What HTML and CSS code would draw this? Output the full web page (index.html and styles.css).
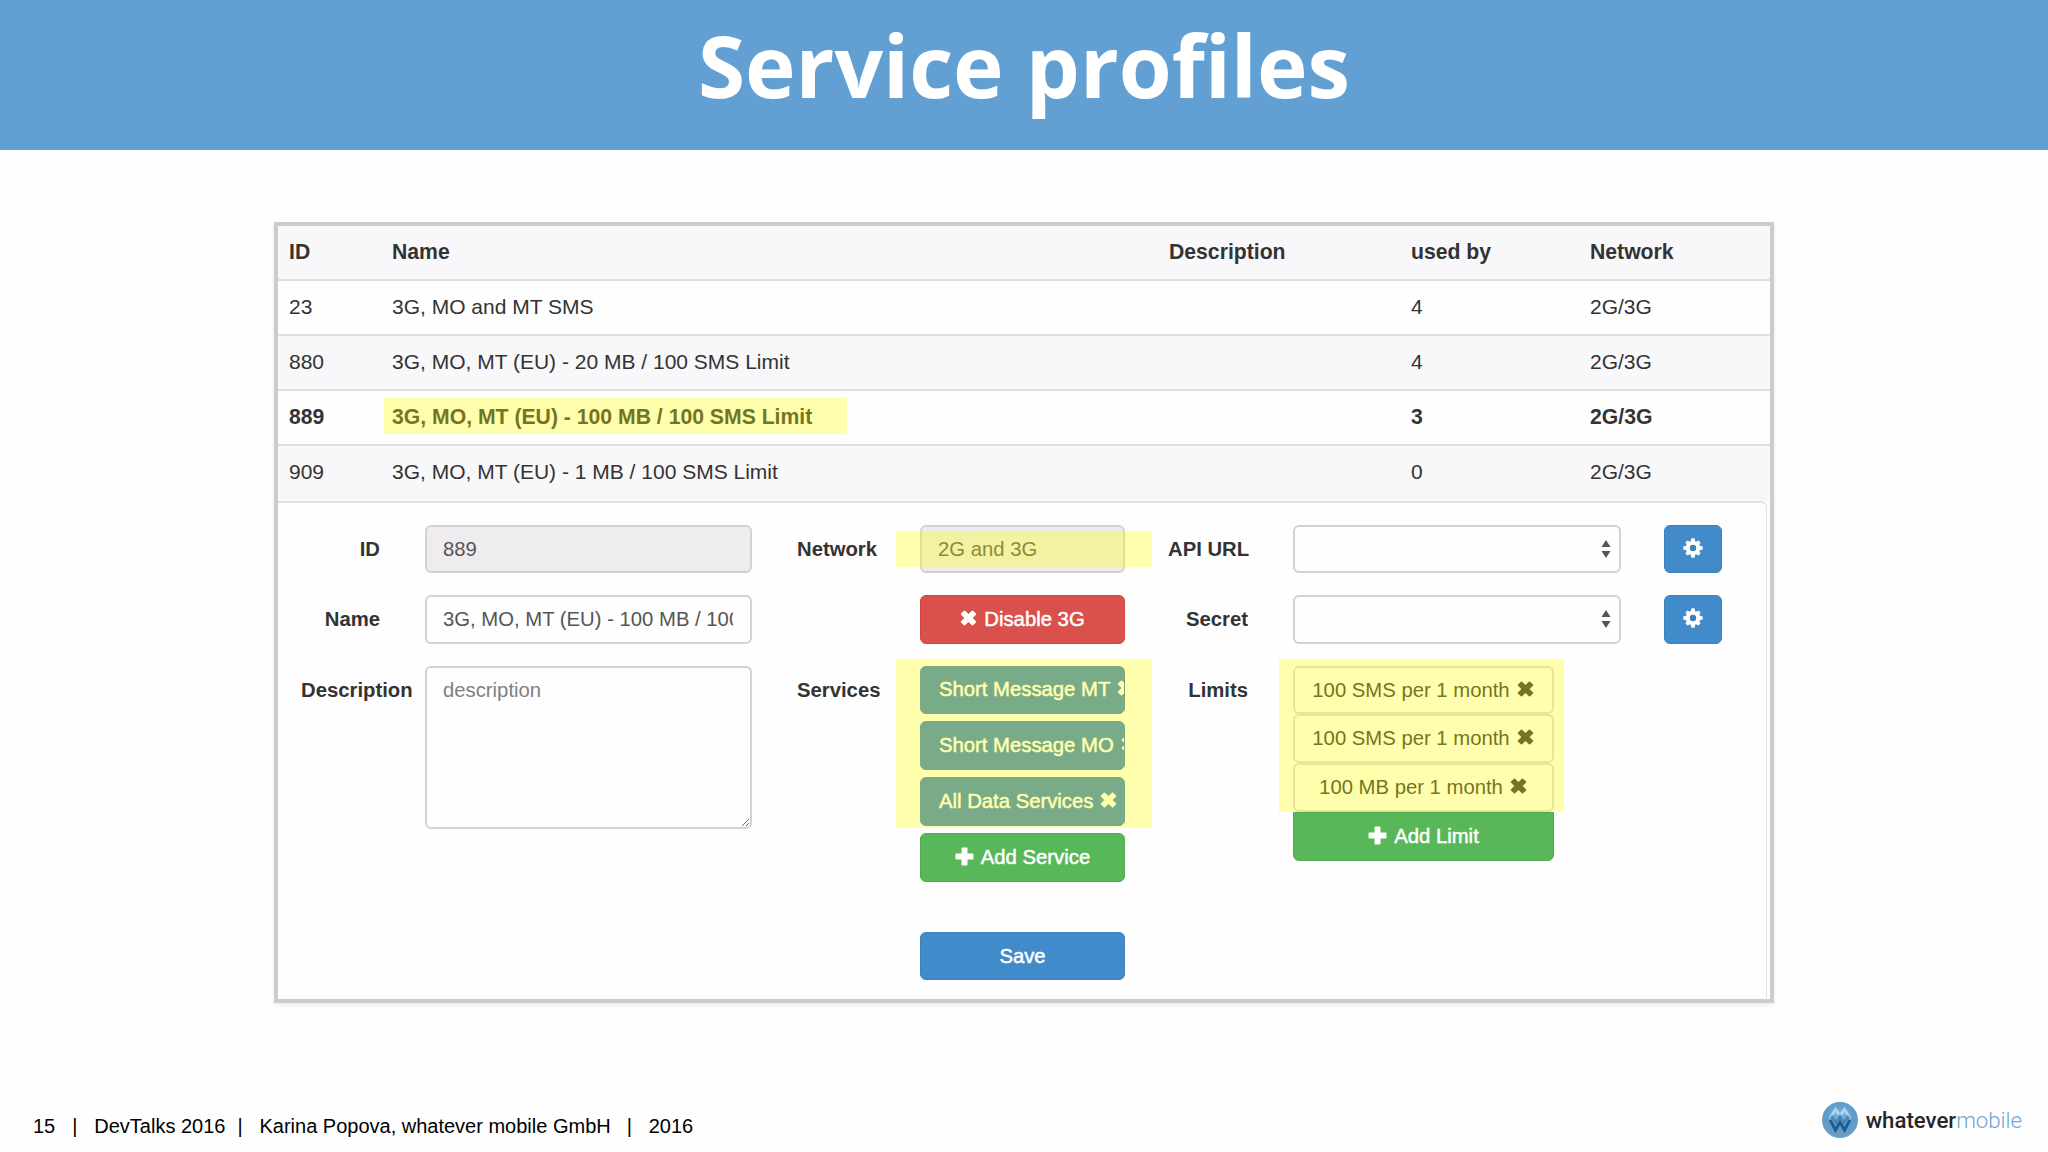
FILE: index.html
```html
<!DOCTYPE html>
<html lang="en">
<head>
<meta charset="UTF-8">
<title>Service profiles</title>
<link rel="stylesheet" href="styles.css">
</head>
<body>
<!-- shared icons -->
<svg class="sprite">
	<symbol id="remove" viewBox="0 0 17 16">
		<path d="M1 3.6 3.9.7q.6-.5 1.2 0l3.4 3.2L11.900.7q.6-.5 1.200 0L16 3.600q.5.500 0 1.100L12.600 8 16 11.300q.5.600 0 1.100L13.100 15.300q-.6.500-1.200 0L8.500 12.100 5.100 15.300q-.6.500-1.200 0L1 12.400q-.5-.5 0-1.100L4.400 8 1 4.700q-.5-.6 0-1.100z"/>
	</symbol>
	<symbol id="plus" viewBox="0 0 19 19">
		<path d="M7.300.5h4.400q.8 0 .8.800v5.200h5.200q.8 0 .8.800v4.400q0 .8-.8.800h-5.200v5.200q0 .8-.8.800H7.300q-.8 0-.8-.8v-5.200H1.300q-.8 0-.8-.8V7.300q0-.8.8-.8h5.200V1.300q0-.8.800-.8z"/>
	</symbol>
	<symbol id="cog" viewBox="-10 -10 20 20">
		<g id="teeth">
			<path d="M-2.400-6 -1.500-9.700h3L2.400-6v12L1.500 9.700h-3L-2.400 6z"/>
			<path transform="rotate(45)" d="M-2.400-6 -1.500-9.200h3L2.400-6v12L1.500 9.200h-3L-2.400 6z"/>
			<path transform="rotate(90)" d="M-2.400-6 -1.500-9.700h3L2.400-6v12L1.500 9.700h-3L-2.400 6z"/>
			<path transform="rotate(135)" d="M-2.400-6 -1.500-9.200h3L2.400-6v12L1.500 9.200h-3L-2.400 6z"/>
		</g>
		<circle r="7"/>
		<circle class="hole" r="3.200"/>
	</symbol>
</svg>

<header class="title">
	<h1>Service profiles</h1>
</header>

<main class="panel">
	<table class="profiles">
		<thead>
			<tr><th class="colId">ID</th><th class="colName">Name</th><th class="colDesc">Description</th><th class="colUsed">used by</th><th>Network</th></tr>
		</thead>
		<tbody>
			<tr><td>23</td><td>3G, MO and MT SMS</td><td></td><td>4</td><td>2G/3G</td></tr>
			<tr><td>880</td><td>3G, MO, MT (EU) - 20 MB / 100 SMS Limit</td><td></td><td>4</td><td>2G/3G</td></tr>
			<tr class="selected"><td>889</td><td><span class="marked markedName">3G, MO, MT (EU) - 100 MB / 100 SMS Limit</span></td><td></td><td>3</td><td>2G/3G</td></tr>
			<tr><td>909</td><td>3G, MO, MT (EU) - 1 MB / 100 SMS Limit</td><td></td><td>0</td><td>2G/3G</td></tr>
		</tbody>
	</table>

	<form class="edit">
		<div class="group">
			<div class="row">
				<label for="profileId">ID</label>
				<input type="text" class="field" id="profileId" value="889" disabled>
			</div>
			<div class="row">
				<label for="profileName">Name</label>
				<input type="text" class="field" id="profileName" value="3G, MO, MT (EU) - 100 MB / 100 SMS Limit">
			</div>
			<div class="row">
				<label for="description">Description</label>
				<textarea class="field area" id="description" placeholder="description"></textarea>
			</div>
		</div>

		<div class="group network">
			<div class="row">
				<label for="network">Network</label>
				<div class="stack marked markedNetwork">
					<input type="text" class="field" id="network" value="2G and 3G" disabled>
				</div>
			</div>
			<div class="row">
				<label></label>
				<div class="stack">
					<button type="button" class="btn red"><svg class="x"><use href="#remove"/></svg>Disable 3G</button>
				</div>
			</div>
			<div class="row">
				<label>Services</label>
				<div class="stack">
					<div class="services marked markedServices">
						<button type="button" class="btn blue service">Short Message MT<svg class="x"><use href="#remove"/></svg></button>
						<button type="button" class="btn blue service">Short Message MO<svg class="x"><use href="#remove"/></svg></button>
						<button type="button" class="btn blue service">All Data Services<svg class="x"><use href="#remove"/></svg></button>
					</div>
					<button type="button" class="btn green"><svg class="plus"><use href="#plus"/></svg>Add Service</button>
					<button type="button" class="btn blue save">Save</button>
				</div>
			</div>
		</div>

		<div class="group api">
			<div class="row">
				<label>API URL</label>
				<div class="field select"><svg viewBox="0 0 10 18"><path d="M5 0 9.500 7H.5zM5 18 .5 11h9z"/></svg></div>
				<button type="button" class="btn blue gear"><svg><use href="#cog"/></svg></button>
			</div>
			<div class="row">
				<label>Secret</label>
				<div class="field select"><svg viewBox="0 0 10 18"><path d="M5 0 9.500 7H.5zM5 18 .5 11h9z"/></svg></div>
				<button type="button" class="btn blue gear"><svg><use href="#cog"/></svg></button>
			</div>
			<div class="row">
				<label>Limits</label>
				<div class="limits">
					<div class="marked markedLimits">
						<div class="btn limit">100 SMS per 1 month<svg class="x"><use href="#remove"/></svg></div>
						<div class="btn limit">100 SMS per 1 month<svg class="x"><use href="#remove"/></svg></div>
						<div class="btn limit">100 MB per 1 month<svg class="x"><use href="#remove"/></svg></div>
					</div>
					<button type="button" class="btn green addLimit"><svg class="plus"><use href="#plus"/></svg>Add Limit</button>
				</div>
			</div>
		</div>
	</form>
</main>

<footer class="footer">
	<div class="info">
		<span class="page">15</span><span class="bar">|</span><span class="event">DevTalks 2016</span><span class="bar">|</span><span class="author">Karina Popova, whatever mobile GmbH</span><span class="bar">|</span><span class="year">2016</span>
	</div>
	<div class="logo">
		<svg class="ball" viewBox="0 0 36 36">
			<defs>
				<radialGradient id="ballFill" cx="50%" cy="42%" r="55%">
					<stop offset="0" stop-color="#7db4dc"/>
					<stop offset=".75" stop-color="#5f9bc8"/>
					<stop offset="1" stop-color="#6f9dc0"/>
				</radialGradient>
			</defs>
			<circle cx="18" cy="18" r="18" fill="url(#ballFill)"/>
			<path class="up" d="M8 16 13.500 7.500 18 13.500 22.500 7.500 28 16"/>
			<path class="mid" d="M9.500 14 14 21 18 14.500 22 21 26.500 14"/>
			<path class="down" d="M8 18 13.500 28 18 20.500 22.500 28 28 18"/>
		</svg>
		<span class="whatever">whatever</span><span class="mobile">mobile</span>
	</div>
</footer>
</body>
</html>
```
FILE: styles.css
```css
* {
	margin: 0px;
	padding: 0px;
	box-sizing: border-box;
}

body {
	width: 2048px;
	height: 1152px;
	display: flex;
	flex-direction: column;
	overflow: hidden;
	background: #fefefe;
	color: #333;
	font-family: "Liberation Sans", Arial, sans-serif;
}

.sprite {
	position: absolute;
	width: 0;
	height: 0;
}

.title {
	height: 150px;
	background: #62a0d3;
	color: #fff;
	text-align: center;
}

.title h1 {
	font-family: "Open Sans", sans-serif;
	font-size: 85.500px;
	line-height: 130px;
	font-weight: bold;
}

.panel {
	width: 1500px;
	height: 781px;
	margin: 72px 0 0 274px;
	border: 4px solid #cdcbcd;
	box-shadow: 0 2px 5px rgba(0, 0, 0, 0.08);
}

/* table */
.profiles {
	width: 100%;
	border-collapse: collapse;
	table-layout: fixed;
	font-size: 21.2px;
}

.profiles th, .profiles td {
	height: 55px;
	padding: 0 0 1px 11px;
	text-align: left;
	border-bottom: 2px solid #e0dee1;
	white-space: nowrap;
}

.profiles td {
	font-size: 21px;
}

.profiles th {
	height: 54px;
}

.profiles .colId {
	width: 103px;
}

.profiles .colName {
	width: 777px;
}

.profiles .colDesc {
	width: 242px;
}

.profiles .colUsed {
	width: 179px;
}

.profiles thead tr, .profiles tbody tr:nth-child(even) {
	background: #f8f7f9;
}

.profiles tbody tr:last-child td {
	height: 56px;
	padding-bottom: 3px;
	border-bottom: none;
}

.profiles .selected td {
	font-size: 21.2px;
	font-weight: bold;
}

/* yellow marker over the important parts */
.marked {
	position: relative;
}

.marked::after {
	content: "";
	position: absolute;
	background: rgba(255, 255, 0, 0.32);
	pointer-events: none;
}

.markedName::after {
	inset: -7px -35px -6px -8px;
}

.markedNetwork::after {
	inset: 6px -27px 6px -24px;
}

.markedServices::after {
	inset: -7px -27px -2px -24px;
}

.markedLimits::after {
	inset: -7px -10px 0 -14px;
}

/* form */
.edit {
	height: 499px;
	margin-right: 3px;
	padding: 22px 0 0 23px;
	display: flex;
	align-items: flex-start;
	border-top: 2px solid #e3e1e4;
	border-right: 1px solid #e3e1e4;
	border-top-right-radius: 6px;
	font-size: 20.3px;
}

.group {
	display: flex;
	flex-direction: column;
	gap: 22px;
}

.network {
	margin-left: 45px;
}

.api {
	margin-left: 43px;
}

.row {
	display: flex;
	align-items: flex-start;
}

.row label {
	width: 79px;
	margin-right: 45px;
	line-height: 48.3px;
	text-align: right;
	font-weight: bold;
	white-space: nowrap;
}

.network .row label {
	width: 80px;
	margin-right: 43px;
}

.api .row label {
	width: 80px;
	margin-right: 45px;
}

.field {
	display: block;
	width: 327px;
	height: 48.3px;
	padding: 0 17px 0 16px;
	border: 2px solid #d3d1d5;
	border-radius: 6px;
	background: #fefefe;
	color: #555;
	font-family: inherit;
	font-size: 20.3px;
}

.field:disabled {
	background: #eeecef;
}

.area {
	height: 163px;
	padding-top: 11px;
	resize: both;
}

.area::placeholder {
	color: #808080;
}

.stack {
	width: 205px;
	display: flex;
	flex-direction: column;
	gap: 7.600px;
}

.stack .field {
	width: 100%;
}

.services {
	display: flex;
	flex-direction: column;
	gap: 7.600px;
}

.btn {
	width: 100%;
	height: 48.3px;
	display: flex;
	align-items: center;
	justify-content: center;
	gap: 7px;
	overflow: hidden;
	border: 1px solid transparent;
	border-radius: 6px;
	color: #fff;
	fill: currentColor;
	font-family: inherit;
	font-size: 20.3px;
	white-space: nowrap;
	-webkit-text-stroke: 0.5px currentColor;
}

.red {
	background: #d9504c;
	border-color: #cf4743;
}

.blue {
	background: #428bca;
	border-color: #3c80bd;
}

.green {
	background: #58b759;
	border-color: #50aa50;
}

.service {
	justify-content: flex-start;
	padding-left: 18px;
	background: #3a83ca;
}

.save {
	margin-top: 43px;
}

.x {
	width: 17px;
	height: 16px;
	margin-bottom: 3px;
	flex: none;
}

.plus {
	width: 19px;
	height: 19px;
	margin-bottom: 2px;
	flex: none;
}

.select {
	width: 328px;
	padding-right: 8px;
	display: flex;
	align-items: center;
	justify-content: flex-end;
}

.select svg {
	width: 10px;
	height: 18px;
	fill: #555;
}

.gear {
	width: 58px;
	margin-left: 43px;
}

.gear svg {
	width: 20px;
	height: 20px;
	margin-bottom: 3px;
}

.hole {
	fill: #3f7fb6;
}

.limits {
	width: 261px;
}

.limit {
	height: 48.9px;
	padding-right: 1px;
	border: 2px solid #dcdadd;
	background: #fefefe;
	color: #333;
	-webkit-text-stroke: 0;
}

.addLimit {
	border-radius: 0 0 6px 6px;
}

/* footer */
.footer {
	flex: 1;
	padding: 0 26px 0 33px;
	display: flex;
	justify-content: space-between;
	color: #000;
	font-size: 20px;
}

.info {
	display: flex;
	padding-top: 112px;
}

.bar {
	width: 5px;
	text-align: center;
}

.page {
	margin-right: 17px;
}

.event {
	margin: 0 12px 0 17px;
}

.author {
	margin: 0 16px 0 17px;
}

.year {
	margin-left: 17px;
}

.logo {
	height: 36px;
	margin-top: 99px;
	display: flex;
	align-items: center;
	font-family: Roboto, sans-serif;
	font-size: 22.200px;
}

.ball {
	width: 36px;
	height: 36px;
	margin-right: 8px;
}

.ball path {
	fill: none;
	stroke-width: 3;
}

.ball .up {
	stroke: #a9d3f0;
}

.ball .mid {
	stroke: #4886b8;
}

.ball .down {
	stroke: #215d8c;
}

.whatever {
	color: #26262a;
	font-weight: 500;
}

.mobile {
	color: #6fa6d3;
	font-weight: 300;
}
```
